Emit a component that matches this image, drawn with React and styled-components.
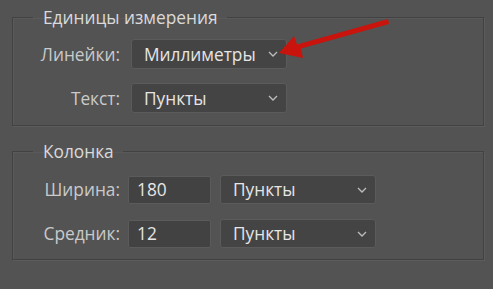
import React from 'react';
import styled, {createGlobalStyle} from "styled-components";

const Global = createGlobalStyle`
  html, body {
    margin: 0;
    padding: 0;
    background: #535353;
  }
  body {
    font-family: "Open Sans", "DejaVu Sans", sans-serif;
    width: 493px;
    height: 289px;
    overflow: hidden;
  }
`;

const Page = styled.div`
  position: relative;
  box-sizing: border-box;
  width: 493px;
  height: 289px;
  padding: 7px 9px 0 12px;
  display: flex;
  flex-direction: column;
  gap: 15px;
`;

const Group = styled.fieldset`
  margin: 0;
  padding: ${p => p.$top}px 0 ${p => p.$bottom}px 0;
  border: 1px solid #424242;
  box-shadow: 1px 1px 0 #5c5c5c, inset 1px 1px 0 #5a5a5a;
  min-width: 0;
`;

const Legend = styled.legend`
  margin-left: 20px;
  padding: 0 9px 0 10px;
  color: #dadada;
  font-size: 17.3px;
  line-height: 21px;
`;

const Rows = styled.div`
  display: grid;
  grid-template-columns: 106px ${p => p.$cols};
  column-gap: ${p => p.$gap}px;
  row-gap: ${p => p.$rowGap}px;
  align-items: center;
`;

const Label = styled.label`
  justify-self: end;
  color: #cacaca;
  font-size: 17.3px;
  line-height: 21px;
  grid-column: 1;
  margin-right: -1px;
`;

const Select = styled.div`
  box-sizing: border-box;
  height: ${p => p.$h}px;
  border: 1px solid #5b5b5b;
  border-radius: 3px;
  background: #444444;
  display: flex;
  align-items: center;
  justify-content: space-between;
  padding: 0 8px 0 12px;
  color: #e6e6e6;
  font-size: 17.3px;
`;

const Field = styled.div`
  box-sizing: border-box;
  height: 28px;
  border: 1px solid #5b5b5b;
  border-radius: 2px;
  background: #424242;
  display: flex;
  align-items: center;
  padding: 0 8px;
  color: #e6e6e6;
  font-size: 17.3px;
`;

const Chevron = () => (
    <svg width="10" height="6" viewBox="0 0 10 6">
        <path d="M1 1 L5 5 L9 1" fill="none" stroke="#bdbdbd" strokeWidth="1.3"/>
    </svg>
);

const Arrow = styled.svg`
  position: absolute;
  left: 0;
  top: 0;
  pointer-events: none;
`;

const App = () => {
    return (
        <Page>
            <Global/>
            <Group $top={11} $bottom={12}>
                <Legend>Единицы измерения</Legend>
                <Rows $cols="156px" $gap={12} $rowGap={14}>
                    <Label>Линейки:</Label>
                    <Select $h={30}>Миллиметры <Chevron/></Select>
                    <Label>Текст:</Label>
                    <Select $h={30}>Пункты <Chevron/></Select>
                </Rows>
            </Group>
            <Group $top={13} $bottom={11}>
                <Legend>Колонка</Legend>
                <Rows $cols="83px 156px" $gap={9} $rowGap={15}>
                    <Label>Ширина:</Label>
                    <Field>180</Field>
                    <Select $h={29}>Пункты <Chevron/></Select>
                    <Label>Средник:</Label>
                    <Field>12</Field>
                    <Select $h={29}>Пункты <Chevron/></Select>
                </Rows>
            </Group>
            <Arrow width="493" height="289" viewBox="0 0 493 289">
                <path d="M388 19 L389 24 L301 48.5 L303 58 L279 53 L294 36 L297 44.5 Z"
                      fill="#c8140c"/>
            </Arrow>
        </Page>
    );
};

export default App;
